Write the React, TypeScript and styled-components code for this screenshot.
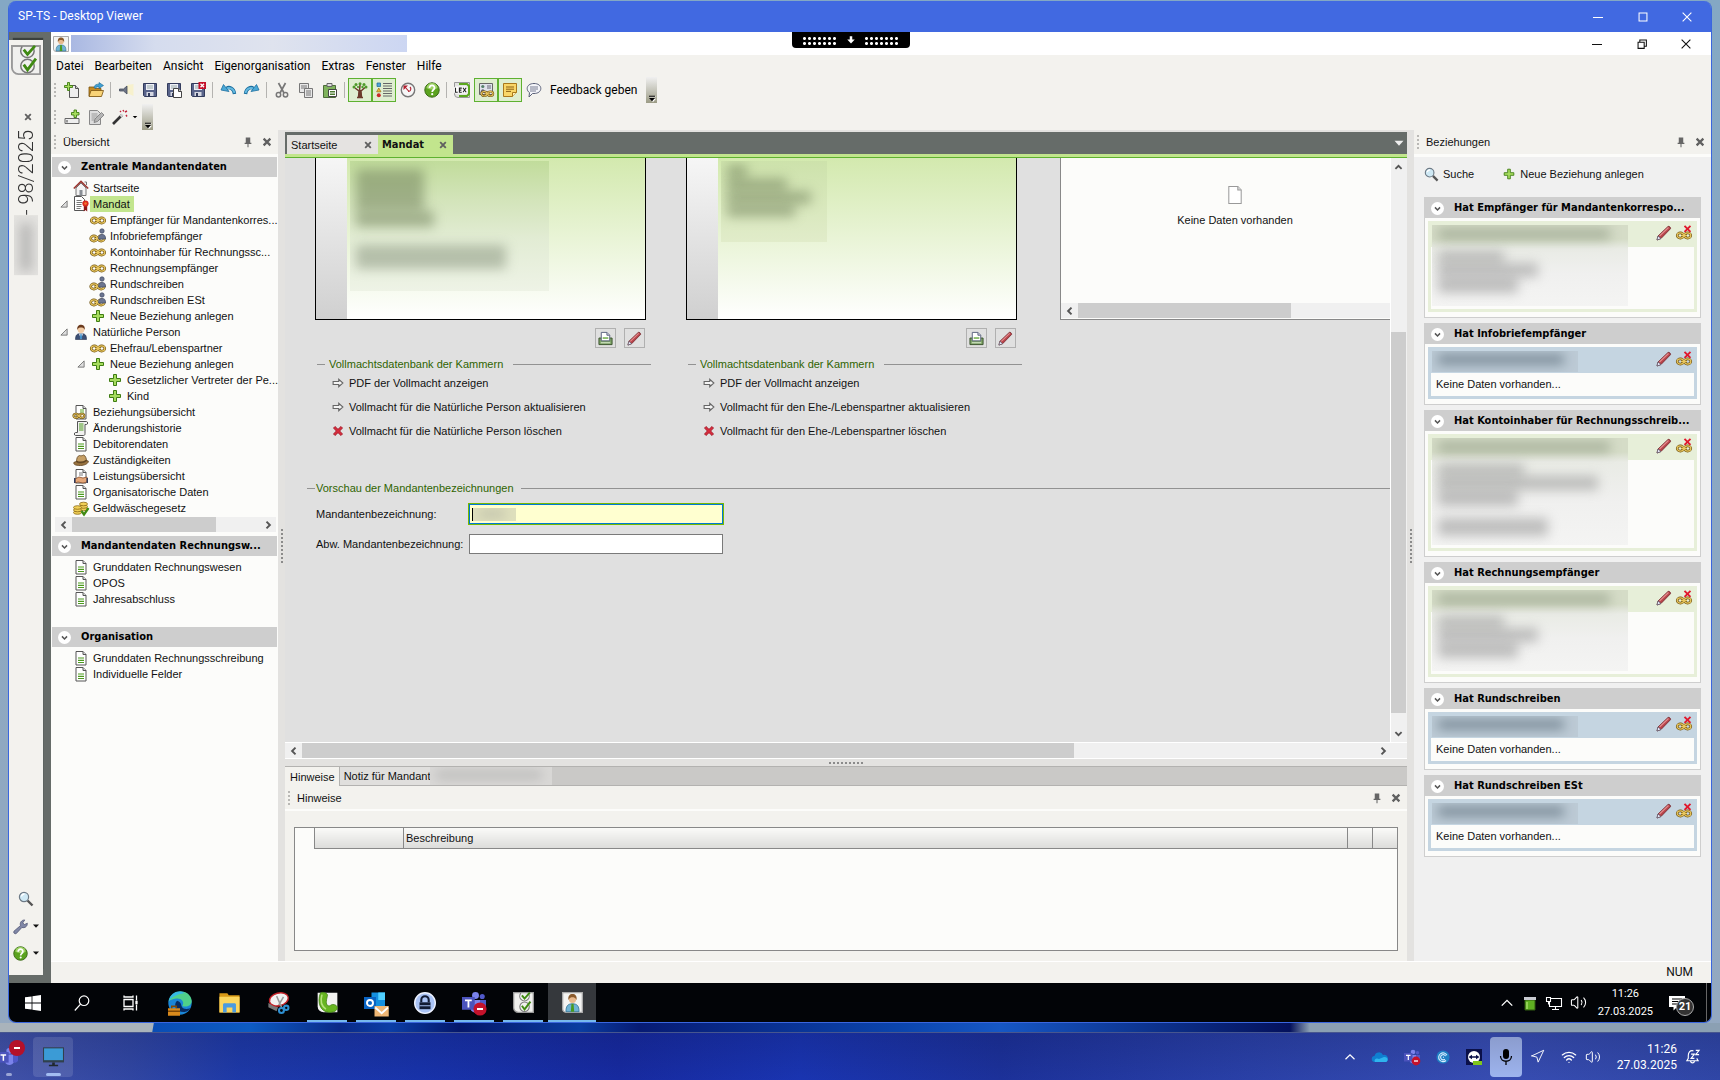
import React from "react";
import styled, { createGlobalStyle, css } from "styled-components";
import { Navigation, Volume2, Wifi } from "lucide-react";

const sans = `"Liberation Sans", Arial, sans-serif`;
const ui = `Roboto, "Open Sans", sans-serif`;
const heading = `"DejaVu Sans Condensed", "DejaVu Sans", sans-serif`;

const Global = createGlobalStyle`
  *, *::before, *::after { box-sizing: border-box; }
  body { margin: 0; font-family: ${sans}; font-size: 11px; color: #111; overflow: hidden; }
  button { border: 0; padding: 0; background: none; font: inherit; color: inherit; display: flex; align-items: center; }
  ul { list-style: none; margin: 0; padding: 0; }
  h2 { margin: 0; }
  svg { display: block; flex: none; }
`;

/* ---------- icons ---------- */

const page = (
  <>
    <path d="M3 1.5h7l3 3v10.5H3z" fill="#fff" stroke="#555" />
    <path d="M10 1.5v3h3" fill="#ddd" stroke="#555" />
  </>
);
const links = (
  <>
    <ellipse cx="4.4" cy="8.500" rx="3.200" ry="2.600" />
    <ellipse cx="11.600" cy="8.500" rx="3.200" ry="2.600" />
    <path d="M5 8.500h6" />
  </>
);
const chain = (
  <g fill="none">
    <g stroke="#6f5312" strokeWidth="2.600">{links}</g>
    <g stroke="#e8c65e" strokeWidth="1.200">{links}</g>
  </g>
);
const plus = <path d="M6.500 2.500h3v4h4v3h-4v4h-3v-4h-4v-3h4z" fill="#a6dc5e" stroke="#3f7d12" />;
const floppy = (
  <>
    <path d="M1.500 1.500h13v13h-12l-1-1z" fill="#59648a" stroke="#333c5c" />
    <path d="M4 2h8v6H4z" fill="#eef0f6" />
    <path d="M5 4h6M5 6h6" stroke="#9aa" />
    <path d="M4.500 10h7v4h-7z" fill="#d5d8e2" />
    <path d="M6 11h2v3H6z" fill="#333c5c" />
  </>
);
const person = (
  <>
    <path d="M2.500 15.500c0-4 1-6 5.500-6s5.500 2 5.500 6z" fill="#3c4f74" stroke="#26334f" strokeWidth=".6" />
    <path d="M6 9.500h4l-2 6z" fill="#fff" />
    <path d="M7.400 10h1.200l.6 4-1.200 1.500L6.800 14z" fill="#3d8ec9" />
    <circle cx="8" cy="5.500" r="3.400" fill="#f3cda6" />
    <path d="M4.300 6C3.800 2 6 .6 8.500.8S12.300 3 11.700 6c-.6-2-2-2.500-3.700-2.500S5 4 4.300 6z" fill="#6a3a1d" />
  </>
);
const arrowUndo = (
  <>
    <path d="M14.500 12C14 6 9 4.500 6.500 6.500" fill="none" stroke="#1c6f9f" strokeWidth="3.400" />
    <path d="M14.500 11C13.500 6 9 5 6 7" fill="none" stroke="#63b9e0" strokeWidth="1.800" />
    <path d="M1 8l2.500-5.500L9 9.500z" fill="#4aa8d6" stroke="#1c6f9f" strokeWidth=".8" />
  </>
);
const checks = (
  <>
    <path d="M.500.500h15v15H4a3.500 3.500 0 01-3.500-3.500z" fill="#f0f0ee" stroke="#999" />
    <g fill="none" stroke="#777" strokeWidth=".8">
      <path d="M6 .8a3.600 3.600 0 105.500 0" />
      <circle cx="8.800" cy="11.200" r="3.600" />
    </g>
    <path d="M6.800 2.500l2 2.500 4-4.500M6.800 10.500l2 2.800 4.500-6" fill="none" stroke="#3f8a12" strokeWidth="1.500" />
  </>
);
const userTile = (
  <>
    <path d="M.500.500h15v15H3a2.500 2.500 0 01-2.500-2.500z" fill="#f4f4f2" stroke="#aaa" />
    <path d="M3 15c0-4.500 1.500-6 5-6s5 1.500 5 6z" fill="#6fb3d4" stroke="#2e6f91" strokeWidth=".6" />
    <path d="M7.200 9h1.600l.5 6H6.700z" fill="#4b9a1f" />
    <circle cx="8" cy="5.500" r="2.800" fill="#e8b98d" />
    <path d="M4.900 6C4.400 2.800 6 1.500 8 1.500S11.600 2.800 11.100 6C10.300 4.300 9 4 8 4S5.700 4.300 4.900 6z" fill="#8a5a2b" />
  </>
);
const teamsBase = (
  <>
    <circle cx="9" cy="3" r="2.300" fill="#7b83eb" />
    <circle cx="13.500" cy="3.700" r="1.700" fill="#5059c9" />
    <path d="M6 6h7v5a4 4 0 01-7 2z" fill="#7b83eb" />
    <path d="M12 6h4v4.500a2.500 2.500 0 01-4 1.500z" fill="#5059c9" />
    <path d="M0 4h8.500v8.500H0z" fill="#4b53bc" />
    <path d="M2 6.300h4.500M4.300 6.300V11" stroke="#fff" strokeWidth="1.200" />
  </>
);

const art: Record<string, React.ReactNode> = {
  newDoc: (
    <>
      <path d="M5.500 3.500h6l3 3v9h-9z" fill="#eee" stroke="#555" />
      <path d="M11.500 3.500v3h3" fill="#ccc" stroke="#555" />
      <path d="M3.500.500h2v3h3v2h-3v3h-2v-3h-3v-2h3z" fill="#a6dc5e" stroke="#3f7d12" strokeWidth=".9" />
    </>
  ),
  open: (
    <>
      <path d="M1 14V5h5l1 1.500h6V14z" fill="#c78a1e" stroke="#7a5310" strokeWidth=".8" />
      <path d="M1 14.500l2-6h12.500l-2 6z" fill="#f8d377" stroke="#7a5310" strokeWidth=".8" />
      <path d="M6 5.500c.5-3 3-3.500 5-3.300V.5l4.500 3-4.500 3V5C9 4.800 8 5 7.500 6.500z" fill="#3f9fd2" stroke="#1d6a94" strokeWidth=".6" />
    </>
  ),
  horn: (
    <>
      <path d="M9 3l6.500-1v12L9 11z" fill="#f7f1cd" />
      <path d="M1.500 7h4L9 4v8L5.500 9h-4z" fill="#6d7486" stroke="#444b5c" strokeWidth=".8" />
    </>
  ),
  save: floppy,
  saveAs: (
    <>
      {floppy}
      <path d="M7.500 6.500h5l3 3v6h-8z" fill="#fff" stroke="#444" />
      <path d="M12.500 6.500v3h3" fill="#ccc" stroke="#444" />
    </>
  ),
  saveX: (
    <>
      {floppy}
      <path d="M8.500 0H16v7H8.500z" fill="#c4122b" />
      <path d="M10.500 1.800l3.500 3.500m0-3.500l-3.500 3.500" stroke="#fff" strokeWidth="1.300" />
    </>
  ),
  undo: arrowUndo,
  redo: <g transform="matrix(-1 0 0 1 16 0)">{arrowUndo}</g>,
  cut: (
    <g fill="none" stroke="#777">
      <path d="M4.500 1l5.500 10M11.500 1L6 11" strokeWidth="1.700" />
      <circle cx="4.500" cy="12.800" r="2.200" strokeWidth="1.500" />
      <circle cx="11.500" cy="12.800" r="2.200" strokeWidth="1.500" />
    </g>
  ),
  copy: (
    <g fill="#e8e8e8" stroke="#777">
      <path d="M1.500 1.500h9v9h-9z" />
      <path d="M3 4h6M3 6h6" />
      <path d="M6.500 6.500h8v9h-8z" />
      <path d="M8 9h5M8 11h5M8 13h5" />
    </g>
  ),
  paste: (
    <>
      <path d="M1.500 3.500h12v12h-12z" fill="#7fb35c" stroke="#4c6b39" />
      <path d="M5 1.500h5v3H5z" fill="#ddd" stroke="#666" />
      <path d="M6.500 7.500h8v7h-8z" fill="#fff" stroke="#444" />
      <path d="M8 9.500h5M8 11h5M8 12.500h5" stroke="#4d7a33" />
    </>
  ),
  tree: (
    <>
      <path d="M6.500 15.500L7 9 3 6M7.500 9L8 3M9.500 15.500L9 9l4-3.500M5 15.500h6M8 8v7" fill="none" stroke="#6b3b2b" strokeWidth="1.500" />
      <g fill="#4e9a2a">
        <circle cx="2" cy="5" r="1.500" /><circle cx="4" cy="2.600" r="1.500" /><circle cx="8" cy="1.800" r="1.500" />
        <circle cx="12" cy="2.600" r="1.500" /><circle cx="14" cy="5" r="1.500" /><circle cx="6" cy="5" r="1.100" /><circle cx="10.500" cy="5" r="1.200" />
      </g>
    </>
  ),
  list: (
    <>
      <path d="M1 1h3.500v3.500H1z" fill="#53a4d6" stroke="#1e6594" strokeWidth=".7" />
      <path d="M2.800 6L5 9.800H.6z" fill="#efbc3c" stroke="#9b7012" strokeWidth=".7" />
      <circle cx="2.800" cy="13.300" r="2" fill="#c92b2b" />
      <path d="M7 1.500h9M7 4h9M7 6.500h9M7 9h9M7 11.500h9M7 14h9" stroke="#666" />
    </>
  ),
  clock: (
    <>
      <circle cx="8" cy="8" r="6.700" fill="#f7f7f7" stroke="#777" strokeWidth="1.400" />
      <path d="M5 5l4 4.500M8 9.500c3 0 3.500-3 2-4.500" fill="none" stroke="#b21f2d" strokeWidth="1.100" />
      <path d="M3.500 3.500H8L3.500 8z" fill="#b21f2d" />
    </>
  ),
  help: (
    <>
      <circle cx="8" cy="8" r="7.200" fill="#5ba31f" stroke="#3a6b16" />
      <path d="M2.500 6a5.500 5 0 0111 0c-3 2-7 2-11 0z" fill="#9ed266" />
      <path d="M5.500 6c0-3.600 5.200-3.300 5 0-.1 1.800-2.300 1.800-2.300 4" fill="none" stroke="#fff" strokeWidth="1.800" />
      <circle cx="8.200" cy="12.200" r="1.100" fill="#fff" />
    </>
  ),
  lex: (
    <>
      <path d="M.500.500h15v15H4a3.500 3.500 0 01-3.500-3.500z" fill="#e4e4e2" stroke="#999" />
      <path d="M5 2h8l2 2v8l-2 2H5" fill="none" stroke="#5ca81f" strokeWidth="2" />
      <rect x="0" y="4.500" width="13.500" height="7" rx="1.500" fill="#fff" />
      <path d="M1.500 5.800v4.400h2.200M7.800 6.100H5.400v4.100h2.400M5.400 8.100h2M9 5.800l3.200 4.500M12.200 5.800L9 10.300" fill="none" stroke="#222" strokeWidth="1.100" />
    </>
  ),
  picture: (
    <>
      <path d="M1.500 1.500h13v11h-13z" fill="#dfe3ec" stroke="#666" />
      <circle cx="4.800" cy="4.500" r="1.600" fill="#55806a" />
      <path d="M2.500 11c0-5 4.600-5 4.600 0z" fill="#667" />
      <path d="M9 4h4M9 6h4" stroke="#667" />
      <g transform="translate(2.500 4.500) scale(.85)">{chain}</g>
    </>
  ),
  note: (
    <>
      <path d="M1.500 1.500h13v9l-4 4h-9z" fill="#f9d667" stroke="#a9781b" />
      <path d="M14.500 10.500h-4v4" fill="#fff0b5" stroke="#a9781b" />
      <path d="M4 5h8M4 7.200h8M4 9.400h5" stroke="#8a6112" />
    </>
  ),
  chat: (
    <>
      <path d="M8 1.500c4 0 6.800 2 6.800 5S12 11.500 8 11.500H6.500L3 15l.5-4.400C2 9.700 1.200 8.200 1.200 6.500c0-3 2.800-5 6.800-5z" fill="#f4f5fa" stroke="#5a6078" />
      <path d="M4 5h8M4 7h8M4 9h6" stroke="#5a6078" strokeWidth=".8" />
    </>
  ),
  formPlus: (
    <>
      <path d="M1 9.500h14v5H1z" fill="#eee" stroke="#666" />
      <path d="M3 11v2.500" stroke="#444" />
      <path d="M10 1h2.500v2.500H15V6h-2.500v2.500H10V6H7.500V3.500H10z" fill="#a6dc5e" stroke="#3f7d12" strokeWidth=".9" />
    </>
  ),
  edit: (
    <>
      <path d="M1.500 1.500h8l3 3v11h-11z" fill="#dedede" stroke="#888" />
      <path d="M3.500 5h6M3.500 7h6M3.500 9h4M3.500 11h3" stroke="#999" />
      <path d="M6 13.500l1-3.500 6.500-6.500 2.500 2.500-6.500 6.500z" fill="#b5b5b5" stroke="#777" strokeWidth=".8" />
    </>
  ),
  wand: (
    <>
      <path d="M1 15L10 6" stroke="#333" strokeWidth="2.600" />
      <path d="M8.500 7.500L10.500 5.500" stroke="#ccc" strokeWidth="2.600" />
      <path d="M11 1l.8 1.500M15 2l-2 1M14 6l1 1.500M8 2l1 1" stroke="#c0253c" strokeWidth="1.400" />
    </>
  ),
  home: (
    <>
      <path d="M3 8v7.500h10V8L8 3z" fill="#f3f3f3" stroke="#777" />
      <path d="M6.500 10h3v5.500h-3z" fill="#8a8f96" />
      <path d="M.8 8.500L8 1.500l7.200 7" fill="none" stroke="#9c3a34" strokeWidth="1.700" />
      <path d="M11.500 2h2v3" fill="none" stroke="#777" />
    </>
  ),
  mandat: (
    <>
      <path d="M1.500.500h7l3 3v11h-10z" fill="#fff" stroke="#555" />
      <path d="M3.500 4.500h5M3.500 6.500h6M3.500 8.500h5M3.500 10.500h5M3.500 12.500h4" stroke="#777" />
      <path d="M10.800 9h3.400v6.500l-1.700-1.400-1.700 1.400z" fill="#8c1717" />
      <circle cx="12.500" cy="7.500" r="3.100" fill="#d9281d" />
      <circle cx="12.500" cy="7.500" r="1.300" fill="#f2772e" />
    </>
  ),
  chain: chain,
  chainPerson: (
    <>
      <g transform="translate(-.5 2)">{chain}</g>
      <path d="M8.500 11c0-3.500 1-4.500 3.500-4.500s3.500 1 3.500 4.500z" fill="#6b7590" stroke="#424b66" strokeWidth=".7" />
      <circle cx="12" cy="3" r="2.200" fill="#6b7590" stroke="#424b66" strokeWidth=".7" />
    </>
  ),
  plus: plus,
  person: person,
  docChain: (
    <>
      {page}
      <path d="M7 6h4M7 8h4" stroke="#5aa522" />
      <g transform="translate(-.5 5) scale(.8)">{chain}</g>
    </>
  ),
  scroll: (
    <>
      <path d="M4.500 1.500h9c1.500 0 1.500 3 0 3H12v9c0 2-1 2-2 2H2.500c-1.500 0-1.500-3 0-3h2z" fill="#f1f1ef" stroke="#555" />
      <path d="M6 4h4.500M6 6h4.500M6 8h4.500M6 10h4.500" stroke="#4d9a1f" />
    </>
  ),
  doc: (
    <>
      {page}
      <path d="M5 8h6M5 10.300h6M5 12.500h6" stroke="#4d9a1f" strokeWidth="1.200" />
    </>
  ),
  hat: (
    <>
      <path d="M.8 10.500C3 9 13 8 15.300 9c.5 2-3 4.500-8 4.500S.5 12.500.8 10.500z" fill="#9a7440" stroke="#5f4421" strokeWidth=".8" />
      <path d="M3.500 10c0-4 1-6 3-6.500 1.500.5 2.500.3 4-.5 2 .5 3 3.500 3 6-2 2-8 2.500-10 1z" fill="#c6a066" stroke="#5f4421" strokeWidth=".8" />
      <path d="M3.600 9.300c3 1.500 7 1 9.800-1" stroke="#5f4421" fill="none" strokeWidth="1.400" />
    </>
  ),
  docHand: (
    <>
      {page}
      <path d="M6 5h4M6 7h4" stroke="#777" />
      <path d="M2 11l4-2 4 1 4-1v5l-4 1-5-1-3 1z" fill="#e5a778" stroke="#8a4f2b" strokeWidth=".8" />
      <path d="M1 10h1.500v5H1zM13.500 10H15v5h-1.500z" fill="#333c5c" />
    </>
  ),
  coins: (
    <>
      <g fill="#f0cf57" stroke="#8c6a13" strokeWidth=".8">
        <ellipse cx="10.500" cy="9" rx="4" ry="1.800" /><ellipse cx="10.500" cy="6.500" rx="4" ry="1.800" />
        <ellipse cx="10.500" cy="4" rx="4" ry="1.800" /><ellipse cx="4.500" cy="12.500" rx="4" ry="1.800" />
        <ellipse cx="4.500" cy="10" rx="4" ry="1.800" /><ellipse cx="4.500" cy="7.500" rx="4" ry="1.800" />
      </g>
      <path d="M8.500 11l2.500 3.500L15.500 8" fill="none" stroke="#3f8a12" strokeWidth="2.200" />
    </>
  ),
  search: (
    <>
      <path d="M9.500 9.500l5 5" stroke="#555" strokeWidth="2.400" />
      <circle cx="6" cy="6" r="4.600" fill="#cfe9f5" stroke="#6d7a86" strokeWidth="1.200" />
      <path d="M3.500 5.500a3 3 0 013-2.500" fill="none" stroke="#fff" strokeWidth="1.300" />
    </>
  ),
  wrench: (
    <path d="M1 13l7-6c-1-3 1-6 4.500-6l-2 3 1.500 2 3.300-1.500C15.500 8 12.500 10 9.500 9L3.500 15.500C2 16.500 0 14.500 1 13z" fill="#8087a6" stroke="#4c5272" strokeWidth=".8" />
  ),
  arrow: <path d="M1.500 6H9V3l5.500 5L9 13v-3H1.500z" fill="#f4f4f4" stroke="#666" strokeWidth="1.500" />,
  cross: <path d="M2 4l2-2 4 3.800L12 2l2 2-3.800 4L14 12l-2 2-4-3.800L4 14l-2-2 3.800-4z" fill="#d92b3c" stroke="#a31c2a" strokeWidth="1.200" />,
  print: (
    <>
      <path d="M1 7.500h14v7H1z" fill="#7fa467" stroke="#38502b" />
      <path d="M3.500 10.500V1.500h6l3 3v6z" fill="#fff" stroke="#59617d" />
      <path d="M9.500 1.500v3h3" fill="#ccd" stroke="#59617d" />
      <path d="M5 7.500h6" stroke="#4d9a1f" strokeWidth="1.300" />
      <path d="M3 12.500h10" stroke="#cfe2c2" strokeWidth="1.200" />
    </>
  ),
  pencil: (
    <>
      <path d="M1 15l1-4L12 1.500c1-.8 3 1 2.500 2.200L5 13.500z" fill="#b8434a" stroke="#6f2429" strokeWidth=".8" />
      <path d="M3.500 11l9-8.500" stroke="#e48d8f" strokeWidth="1.100" />
      <path d="M1 15l1-4 3 2.500z" fill="#eef" stroke="#556" strokeWidth=".7" />
    </>
  ),
  chainX: (
    <>
      <g transform="translate(0 2)">{chain}</g>
      <path d="M8.500.8l6 6m0-6l-6 6" stroke="#e0182d" strokeWidth="1.900" />
    </>
  ),
  pin: <path d="M5 2h6v7h1.500v1.500H8.700V15H7.300v-4.500H3.500V9H5z" fill="#666" />,
  close: <path d="M3.500 3.500l9 9m0-9l-9 9" stroke="#606060" strokeWidth="3" />,
  checks: checks,
  userTile: userTile,
  emptyDoc: (
    <>
      <path d="M2.500.500h8l3 3v12h-11z" fill="#fff" stroke="#999" strokeWidth=".9" />
      <path d="M10.500.500v3h3" fill="#ddd" stroke="#999" strokeWidth=".9" />
    </>
  ),
  chevLeft: <path d="M10 3.500L5.500 8l4.500 4.500" fill="none" stroke="#555" strokeWidth="2.600" />,
  chevRight: <path d="M6 3.500L10.500 8 6 12.500" fill="none" stroke="#555" strokeWidth="2.600" />,
  chevUp: <path d="M3.500 10L8 5.500l4.500 4.500" fill="none" stroke="#555" strokeWidth="2.600" />,
  chevDown: <path d="M3.500 6L8 10.500 12.500 6" fill="none" stroke="#555" strokeWidth="2.600" />,
  thinUp: <path d="M2 11l6-6 6 6" fill="none" stroke="#fff" strokeWidth="1.600" />,
  down: <path d="M2 5h12l-6 6.500z" fill="currentColor" />,
  downStem: <path d="M6 2h4v5h4l-6 6.500L2 7h4z" fill="currentColor" />,
  more: (
    <>
      <path d="M3 4.500h12v2H3zM4 9.500h12l-6 6.500z" fill="#fff" />
      <path d="M2 3.500h12v2H2zM2 8h12l-6 6.500z" fill="#000" />
    </>
  ),
  expander: <path d="M13 3v10H3z" fill="#ddd" stroke="#666" strokeWidth="1.300" />,
  min: <path d="M3 8.500h10" stroke="currentColor" strokeWidth="1.200" />,
  max: <path d="M3.500 3.500h9v9h-9z" fill="none" stroke="currentColor" strokeWidth="1.200" />,
  restore: <path d="M3.500 6h7v7h-7zM5.500 6V3.500H13v7h-2.500" fill="none" stroke="currentColor" strokeWidth="1.200" />,
  x: <path d="M3 3l10 10M13 3L3 13" stroke="currentColor" strokeWidth="1.300" />,
  /* task bar */
  windows: <path d="M0 2.300l6.600-.9v6.200H0zM7.400 1.300L16 0v7.600H7.400zM0 8.400h6.600v6.200L0 13.700zM7.400 8.400H16V16l-8.600-1.200z" fill="#fff" />,
  find: (
    <g fill="none" stroke="#fff" strokeWidth="1.200">
      <circle cx="10" cy="5.700" r="4.800" />
      <path d="M6.600 9.200L.8 15.500" />
    </g>
  ),
  taskView: (
    <g fill="none" stroke="#fff" strokeWidth="1.300">
      <path d="M1 4.500h9v7H1zM1 .5V2h9V.5M1 15.500V14h9v1.500M13.500.5v5M13.500 9.500v6" />
      <path d="M13 6.500h1v2h-1z" fill="#fff" />
    </g>
  ),
  edge: (
    <>
      <circle cx="8" cy="8" r="7.800" fill="#1a86d8" />
      <path d="M.5 7C2-2 15-1.500 15.800 6.500c.2 3.500-4 4.500-6.300 3.500 2-3-1-5.500-4-5C3 5.500 1 6 .5 7z" fill="#4fd08a" />
      <path d="M.5 7C2 .5 8-.5 11 1.500 7 2 2.500 3.500.5 7z" fill="#35b7e8" />
      <path d="M6 6.500c-3 3 0 8 5 7.500 2-.2 3-1 4-2.500-3 1-5.500.5-6-1.500-.4-2-1-3-3-3.500z" fill="#082d63" />
      <path d="M0 11.500h8v5H0z" fill="#d98a1c" />
      <path d="M2.500 11.500v-1.300h3v1.300M0 13.500h8" fill="none" stroke="#7d4706" />
    </>
  ),
  folder: (
    <>
      <path d="M1 1.500h5.500l1 1.500H15v12H1z" fill="#d99a17" />
      <path d="M1 4h14v11H1z" fill="#fbd65e" />
      <path d="M3.500 15V9.500c0-.6.4-1 1-1h7c.6 0 1 .4 1 1V15h-2.500v-3.500h-4V15z" fill="#4a9be0" />
    </>
  ),
  snip: (
    <>
      <path d="M1 8l7 3-1 3-6-3z" fill="#777" />
      <ellipse cx="8.500" cy="5.500" rx="7" ry="4.600" fill="#f1f1f1" stroke="#c22026" transform="rotate(-15 8 5)" />
      <path d="M7 3l4 9M12 3.500L8.500 9.500" stroke="#999" strokeWidth="1.100" />
      <g fill="none" stroke="#2e8fd0" strokeWidth="1.500"><circle cx="10.500" cy="13.500" r="1.800" /><circle cx="14" cy="11.500" r="1.600" /></g>
    </>
  ),
  phone: (
    <>
      <path d="M.500.500h15v15H5A4.500 4.500 0 01.500 11z" fill="#f2f2f0" />
      <path d="M2.500 1C0 8 2.500 15 9 15.500c4 .2 6.500-1.500 6.500-3.500 0-1.500-1.500-2.500-3.500-2.500-1.500 0-2 1.500-3.500 1C6 9.500 7.500 5 8 2.500 8 .5 3.500-.5 2.500 1z" fill="#67b520" stroke="#3f7d12" strokeWidth=".6" />
      <path d="M3.800 2c-1.500 5 0 9 3 11" fill="none" stroke="#b6e27c" strokeWidth="1.200" />
    </>
  ),
  outlook: (
    <>
      <path d="M5 1h9v10H5z" fill="#1490df" />
      <path d="M9.500 1H14v5H9.500z" fill="#50d0ff" />
      <path d="M0 4h8v8H0z" fill="#0a64c2" />
      <circle cx="4" cy="8" r="2" fill="none" stroke="#fff" strokeWidth="1.300" />
      <path d="M7 10h9.500v7H7z" fill="#efb775" />
      <path d="M7.500 11l4.300 3.800L16 11" fill="none" stroke="#fff" strokeWidth="1.200" />
    </>
  ),
  lock: (
    <>
      <circle cx="8" cy="8" r="7.500" fill="#a9c3f5" stroke="#eef3ff" />
      <path d="M4 7.500h8v5H4z" fill="#111b33" />
      <path d="M5.300 7.500V5.800a2.700 2.700 0 015.400 0v1.700" fill="none" stroke="#111b33" strokeWidth="1.500" />
      <path d="M4 10h8" stroke="#a9c3f5" strokeWidth=".7" />
    </>
  ),
  teams: (
    <>
      {teamsBase}
      <circle cx="12" cy="12" r="4.400" fill="#c4122b" />
      <path d="M10 12h4" stroke="#fff" strokeWidth="1.300" />
    </>
  ),
  teamsPlain: teamsBase,
  battery: (
    <>
      <path d="M3 5h10v10H3z" fill="#5fb022" stroke="#2f5a10" />
      <path d="M2 2h12v3H2z" fill="#c9ccd2" />
      <path d="M5 7v7" stroke="#a9e06f" strokeWidth="1.400" />
    </>
  ),
  network: (
    <g fill="none" stroke="#fff" strokeWidth="1.100">
      <path d="M4 3.500h11.500v8H3.500V7M9.500 11.500v3M6 14.500h7M.5 2.500h4v4h-4zM2.500 6.500v3" />
    </g>
  ),
  message: (
    <>
      <path d="M0 1h16v11H8l-3.500 3.500V12H0z" fill="#fff" />
      <path d="M3 4h10M3 6.500h10M3 9h7" stroke="#000" strokeWidth="1.200" />
    </>
  ),
  monitor: (
    <>
      <path d="M0 1h16v11.500H0z" fill="#31404d" />
      <path d="M.8 1.800h14.400v9H.8z" fill="#3b9bd6" />
      <path d="M7 12.500h2v2H7zM4.500 14.300h7v1.200h-7z" fill="#20282f" />
    </>
  ),
  cloud: (
    <>
      <path d="M3 13a3 3 0 01-.5-6A4.500 4.500 0 0111 6a3.500 3.500 0 012.500 7z" fill="#0f7ed0" />
      <path d="M3 13c-1.500-3 2-4.500 4-3l5-2c3 0 4 1.500 3.500 3.500-.5 1-1.200 1.500-2 1.500z" fill="#2fb4ee" />
    </>
  ),
  swirl: (
    <>
      <circle cx="8" cy="8" r="7.500" fill="#1f7fc4" />
      <path d="M12.500 6a5 5 0 10-1 6M11 7a3 3 0 10-.8 3.600M8 8l1 .5" fill="none" stroke="#d8efff" strokeWidth="1.300" />
    </>
  ),
  teamViewer: (
    <>
      <path d="M0 0h16v16H0z" fill="#0b1049" />
      <circle cx="8" cy="8" r="6" fill="#fff" />
      <path d="M2.500 8L6 5.800v1.500h4V5.800L13.500 8 10 10.200V8.700H6v1.500z" fill="#0b1049" />
      <path d="M7 12h9v4H7z" fill="#7fc51c" />
    </>
  ),
  mic: (
    <>
      <rect x="5" y="0" width="6" height="10" rx="3" fill="#000" />
      <path d="M2.500 7c0 7 11 7 11 0M8 12.500V16" fill="none" stroke="#000" strokeWidth="1.300" />
    </>
  ),
  snooze: (
    <>
      <path d="M9 2C5 1 3.500 4 3.500 7v3L2 12.500h12L12.500 10M6 12.500c0 3 4 3 4 0" fill="none" stroke="#fff" strokeWidth="1.200" />
      <path d="M6.500 5.500h3.500L6.500 10H10M11.500 1.500H15L11.500 6H15" fill="none" stroke="#fff" strokeWidth="1.200" />
    </>
  ),
};

function Icon({ name, size = 16 }: { name: string; size?: number }) {
  return (
    <svg width={size} height={size} viewBox="0 0 16 16" aria-hidden="true" overflow="visible">
      {art[name]}
    </svg>
  );
}

/* ---------- desktop and viewer window ---------- */

const Desktop = styled.div`
  height: 100vh;
  display: grid;
  grid-template-rows: minmax(0, 1fr) 48px;
  background:
    linear-gradient(100deg, #a9b3bb 0 151px, transparent 152px) bottom 48px left 0 / 100% 9px no-repeat,
    linear-gradient(90deg, #0a4db4 150px, #0d5bc3 250px, #0a2a88 340px, #0b3ea6 390px, #05176b 460px, #0a3da0 580px, #071b74 640px, #0b45ad 900px, #1657c4 1000px, #04115c 1290px, #8ba0b3 1310px) bottom 48px left 0 / 100% 9px no-repeat,
    linear-gradient(#84a8c4, #94a8c0);
`;

const Viewer = styled.div`
  margin: 1px 8px 9px;
  min-height: 0;
  border: 1px solid #3a66de;
  border-top: 0;
  border-radius: 8px;
  overflow: hidden;
  display: flex;
  flex-direction: column;
`;

const ViewerTitle = styled.header`
  height: 31px;
  flex: none;
  padding-left: 9px;
  background: #4169e1;
  color: #fff;
  font: 12px/31px ${ui};
  display: flex;
  justify-content: space-between;
`;

const Controls = styled.div`
  display: flex;
  align-items: center;
  gap: 30px;
  padding-right: 17px;
  button { height: 16px; }
`;

const Session = styled.div`
  flex: 1;
  min-height: 0;
  display: flex;
`;

const Gutter = styled.div`
  width: 42px;
  flex: none;
  padding: 8px 8px 8px 0;
  background: #666c69;
`;

const Strip = styled.aside`
  height: 100%;
  background: #f3f2ee;
  box-shadow: 2px -4px 1px -2px #3a403e;
  display: flex;
  flex-direction: column;
  align-items: center;
  padding: 5px 0 14px;
`;

const StripClose = styled.button`
  margin: 37px 0 8px 4px;
`;

const VerticalLabel = styled.div`
  writing-mode: vertical-rl;
  transform: rotate(180deg);
  font: 300 20px/24px ${ui};
  color: #333;
  display: flex;
  align-items: center;
`;

const StripTools = styled.div`
  margin-top: auto;
  display: flex;
  flex-direction: column;
  gap: 11px;
  width: 100%;
  padding-left: 4px;
  button { gap: 4px; height: 16px; }
  button:first-child { padding-left: 5px; }
`;

const AppFrame = styled.div`
  flex: 1;
  min-width: 0;
  display: flex;
  flex-direction: column;
  background: #f3f2ee;
`;

/* obscured personal data: a patch with smudged lines */
const Patch = styled.div<{ $w: number; $h: number; $bg?: string }>`
  width: ${(p) => p.$w}px;
  height: ${(p) => p.$h}px;
  flex: none;
  background: ${(p) => p.$bg ?? "transparent"};
  overflow: hidden;
  padding: 4px 6px;
`;
const Smudge = styled.div<{ $w: string; $c?: string; $h?: number; $mt?: number }>`
  width: ${(p) => p.$w};
  height: ${(p) => p.$h ?? 13}px;
  margin-top: ${(p) => p.$mt ?? 0}px;
  background: ${(p) => p.$c ?? "#8b8b8b"};
  opacity: 0.5;
  filter: blur(6px);
`;

const AppTitle = styled.div`
  height: 23px;
  flex: none;
  background: #fff;
  display: flex;
  align-items: center;
  padding-left: 2px;
  gap: 2px;
  position: relative;
  > ${Controls} { margin-left: auto; padding-right: 18px; }
`;

const SessionHandle = styled.button`
  position: absolute;
  top: 0;
  left: calc(50% - 89px);
  width: 118px;
  height: 16px;
  justify-content: center;
  gap: 8px;
  background: #000;
  border-radius: 0 0 4px 4px;
  color: #fff;
`;

const Dots = styled.span`
  width: 36px;
  height: 9px;
  background: radial-gradient(circle, #fff 1px, transparent 2px) 0 0 / 5px 5px;
`;

const MenuBar = styled.nav`
  height: 22px;
  flex: none;
  display: flex;
  gap: 11px;
  padding-left: 5px;
  font: 12px/22px ${ui};
  color: #000;
`;

const Toolbar = styled.div`
  height: 26px;
  flex: none;
  display: flex;
  align-items: center;
  padding-left: 3px;
  font: 12px/24px ${ui};
  color: #000;
  & + & { margin-top: 1px; }
`;

const Grip = styled.span`
  width: 2px;
  height: 14px;
  flex: none;
  background: repeating-linear-gradient(#b9b8b5 0 2px, transparent 2px 4px);
  ${Toolbar} > & { margin-right: 4px; }
`;

const Tool = styled.button<{ $on?: boolean }>`
  width: 24px;
  height: 24px;
  flex: none;
  justify-content: center;
  ${(p) => p.$on && css`
    border: 1px solid #5eb130;
    background: #dfeed0;
  `}
`;

const TextTool = styled.button`
  padding-left: 4px;
`;

const Separator = styled.span`
  width: 1px;
  height: 16px;
  margin: 0 3px 0 2px;
  background: #b4b3b0;
`;

const Overflow = styled.button<{ $near?: boolean }>`
  width: 11px;
  height: 26px;
  margin-left: ${(p) => (p.$near ? 4 : 9)}px;
  align-items: flex-end;
  justify-content: center;
  padding-bottom: 1px;
  background: linear-gradient(#f0f0f0, #9c9c86);
`;

const Workspace = styled.div`
  flex: 1;
  min-height: 0;
  display: grid;
  grid-template-columns: 227px 7px minmax(0, 1fr) 7px 297px;
  background: #e3e2e0;
`;

const StatusBar = styled.footer`
  height: 22px;
  flex: none;
  border-top: 1px solid #fff;
  padding-right: 18px;
  font: 12px/21px ${ui};
  text-align: right;
`;

const Splitter = styled.div<{ $row?: boolean }>`
  display: flex;
  align-items: center;
  justify-content: center;
  ${(p) => (p.$row ? css`height: 7px; flex: none;` : css``)}
  &::before {
    content: "";
    width: ${(p) => (p.$row ? "34px" : "2px")};
    height: ${(p) => (p.$row ? "2px" : "34px")};
    background: repeating-linear-gradient(${(p) => (p.$row ? "90deg" : "180deg")}, #8b8b8b 0 2px, transparent 2px 4px);
  }
`;

/* ---------- docked panels ---------- */

const Panel = styled.section<{ $bg: string }>`
  background: ${(p) => p.$bg};
  min-height: 0;
  min-width: 0;
  display: flex;
  flex-direction: column;
  overflow: hidden;
`;

const PanelHead = styled.header`
  height: 27px;
  flex: none;
  background: #f3f2ee;
  border-bottom: 3px solid #fcfcfa;
  display: flex;
  align-items: center;
  gap: 7px;
  padding: 0 5px 0 3px;
  button:first-of-type { margin-left: auto; }
`;

const GroupHead = styled.button`
  width: calc(100% - 2px);
  height: 20px;
  flex: none;
  margin-left: 1px;
  padding-left: 6px;
  gap: 10px;
  background: #cecece;
  font: bold 11px/20px ${heading};
  color: #000;
  white-space: nowrap;
`;

const Round = styled.span`
  width: 13px;
  height: 13px;
  border-radius: 50%;
  background: #fff;
  display: grid;
  place-items: center;
`;

const Tree = styled.ul`
  padding-top: 3px;
`;

const Row = styled.li<{ $level: number }>`
  height: 16px;
  display: flex;
  align-items: center;
  padding-left: ${(p) => 8 + p.$level * 17}px;
`;

const Twisty = styled.span`
  width: 14px;
  flex: none;
  display: flex;
`;

const Node = styled.button<{ $selected?: boolean }>`
  height: 16px;
  white-space: nowrap;
  span {
    padding: 0 4px 0 3px;
    line-height: 16px;
    margin-left: 1px;
    ${(p) => p.$selected && css`background: #c2e58d;`}
  }
`;

const HBar = styled.div<{ $thumb: string }>`
  height: 15px;
  flex: none;
  background: #f0f0f0;
  display: grid;
  grid-template-columns: 17px minmax(0, 1fr) 17px;
  place-items: center;
  > span {
    justify-self: start;
    width: ${(p) => p.$thumb};
    height: 15px;
    background: #cdcdcd;
  }
`;

const TreeScroll = styled.div`
  margin: 1px 2px 4px 4px;
`;

const Spacer = styled.div`
  height: 20px;
`;

/* ---------- document area ---------- */

const Center = styled.main`
  display: flex;
  flex-direction: column;
  padding-top: 2px;
  min-width: 0;
  min-height: 0;
`;

const Tabs = styled.div`
  height: 26px;
  flex: none;
  display: flex;
  align-items: flex-start;
  padding: 3px 2px 0;
  background: #666c69;
  border-bottom: 1px solid #5eb130;
  box-shadow: inset 0 -3px #c2e58d;
`;

const Tab = styled.button<{ $active?: boolean }>`
  height: 19px;
  width: ${(p) => (p.$active ? 75 : 91)}px;
  justify-content: space-between;
  padding: 0 5px 0 4px;
  background: ${(p) => (p.$active ? "#c2e58d" : "#e5e3e1")};
  ${(p) => p.$active && css`font: bold 11px/19px ${heading};`}
`;

const TabMenu = styled.button`
  margin: 2px 0 0 auto;
  color: #eee;
`;

const Canvas = styled.div`
  flex: 1;
  min-height: 0;
  display: flex;
  background: #e0e0e0;
`;

const Form = styled.div`
  flex: 1;
  min-width: 0;
  overflow: hidden;
  padding-left: 22px;
`;

const CardRow = styled.div`
  display: flex;
  padding-left: 8px;
  gap: 35px;
`;

const CardColumn = styled.div`
  width: 336px;
  flex: none;
`;

const Card = styled.div`
  width: 331px;
  height: 162px;
  border: 1px solid #000;
  border-top: 0;
  padding: 3px 0 0 34px;
  background:
    linear-gradient(#f6f6f6, #d0d0d0) 0 0 / 31px 100% no-repeat,
    linear-gradient(#d3e9ae, #fff);
`;

const CardTools = styled.div`
  display: flex;
  justify-content: flex-end;
  gap: 8px;
  padding: 8px 6px 9px 0;
`;

const BoxButton = styled.button`
  width: 21px;
  height: 20px;
  justify-content: center;
  border: 1px solid #b0b0b0;
`;

const Legend = styled.h2<{ $tight?: boolean }>`
  display: flex;
  align-items: center;
  gap: ${(p) => (p.$tight ? 1 : 4)}px;
  font: 11px/14px ${sans};
  color: #2f6400;
  white-space: nowrap;
  margin-left: ${(p) => (p.$tight ? 0 : 2)}px;
  &::before { content: ""; width: 8px; height: 1px; background: #929292; }
  &::after { content: ""; flex: 1; height: 1px; margin-left: 6px; background: #929292; }
`;

const Action = styled.button`
  height: 24px;
  gap: 5px;
  padding-left: 17px;
  white-space: nowrap;
`;

const EmptyList = styled.div`
  flex: 1;
  min-width: 0;
  height: 162px;
  margin-left: 3px;
  border: solid #888;
  border-width: 0 0 1px 1px;
  background: #fcfcfa;
  overflow: hidden;
  display: flex;
  flex-direction: column;
  > div:first-child {
    flex: 1;
    width: 348px;
    padding-top: 28px;
    display: flex;
    flex-direction: column;
    align-items: center;
    gap: 10px;
  }
  > div:last-child { width: 400px; margin-bottom: 1px; }
`;

const Names = styled.div`
  padding: 38px 0 0;
`;

const Field = styled.div`
  display: grid;
  grid-template-columns: 152px 256px;
  align-items: center;
  padding-left: 9px;
  height: 22px;
  margin-top: 8px;
  white-space: nowrap;
`;

const Input = styled.input<{ $focus?: boolean }>`
  height: ${(p) => (p.$focus ? 22 : 20)}px;
  margin: ${(p) => (p.$focus ? 0 : "0 1px")};
  border: 1px solid #7a7a7a;
  padding: 0 4px;
  background: #fff;
  font: 11px ${sans};
  outline: 0;
  ${(p) => p.$focus && css`
    border-color: #76b900;
    box-shadow: inset 0 0 0 1px #0078d7;
    background: #ffffd0;
  `}
`;

const InputWrap = styled.div`
  position: relative;
  display: grid;
  > div {
    position: absolute;
    left: 4px;
    top: 5px;
    border-left: 1px solid #000;
  }
`;

const VBar = styled.div`
  width: 17px;
  flex: none;
  border-left: 1px solid #fff;
  background: #f0f0f0;
  display: flex;
  flex-direction: column;
  align-items: center;
  padding: 4px 1px 3px 0;
  > svg:last-child { margin-top: auto; }
`;

const VThumb = styled.div`
  width: 15px;
  flex: 0 1 381px;
  margin-top: 159px;
  background: #cdcdcd;
`;

const BarWrap = styled.div`
  border: solid #fff;
  border-width: 1px 0;
  padding-right: 16px;
  background: #f0f0f0;
`;

const BottomTabs = styled.div`
  height: 20px;
  flex: none;
  display: flex;
  background: #cac9c7;
  border: solid #b3b2b0;
  border-width: 1px 0;
`;

const BottomTab = styled.button<{ $active?: boolean }>`
  height: ${(p) => (p.$active ? 19 : 18)}px;
  padding: 0 ${(p) => (p.$active ? 4 : 0)}px 0 ${(p) => (p.$active ? 5 : 4)}px;
  background: ${(p) => (p.$active ? "#f3f2ee" : "#e0dfdd")};
  border-right: ${(p) => (p.$active ? 1 : 0)}px solid #b3b2b0;
`;

const TableFrame = styled.div`
  flex: 1;
  margin: 16px 9px 10px;
  border: 1px solid #888;
  padding-left: 19px;
  background: #fcfcfa;
`;

const Table = styled.table`
  width: 100%;
  table-layout: fixed;
  border-collapse: collapse;
  th {
    height: 20px;
    padding: 0 2px;
    text-align: left;
    font-weight: normal;
    background: linear-gradient(#fafaf8, #dcdcda);
    border-left: 1px solid #888;
    border-bottom: 1px solid #888;
  }
`;

/* ---------- relations ---------- */

const RelationTools = styled.div`
  display: flex;
  height: 40px;
  padding: 0 0 6px 10px;
  gap: 28px;
  button { gap: 4px; }
`;

const Relations = styled.div`
  padding: 0 10px;
  display: flex;
  flex-direction: column;
  gap: 5px;
`;

const RelationBox = styled.article`
  border: 1px solid #cecece;
  background: #fcfcfa;
  > button { height: 20px; margin: 0; width: 100%; }
`;

const Relation = styled.div<{ $tone: string }>`
  margin: 3px 3px 5px;
  border: 3px solid ${(p) => p.$tone};
  border-top: 0;
  background: linear-gradient(${(p) => p.$tone} 26px, #fcfcfa 26px);
  position: relative;
`;

const RelationIcons = styled.div`
  position: absolute;
  right: 2px;
  top: 4px;
  display: flex;
  gap: 4px;
`;

const RelationBody = styled.div<{ $h: number }>`
  height: ${(p) => p.$h}px;
  padding: 4px 0 0 1px;
  p { margin: 0; padding: 0 0 0 4px; line-height: 24px; }
`;

/* ---------- task bars ---------- */

const RemoteTaskbar = styled.footer`
  height: 39px;
  flex: none;
  background: #020407;
  color: #fff;
  display: flex;
  align-items: stretch;
  font: 11px/18px ${ui};
`;

const Task = styled.button<{ $open?: boolean; $active?: boolean }>`
  width: ${(p) => (p.$active ? 48 : 40)}px;
  margin-right: ${(p) => (p.$active ? 0 : 9)}px;
  justify-content: center;
  ${(p) => p.$open && css`border-bottom: 2px solid #76b9ed; padding-top: 2px;`}
  ${(p) => p.$active && css`background: #35383c; margin-left: -4px;`}
`;

const Tasks = styled.div`
  display: flex;
  padding-left: 4px;
`;

const Tray = styled.div<{ $host?: boolean }>`
  margin-left: auto;
  display: flex;
  align-items: center;
  gap: ${(p) => (p.$host ? 16 : 8)}px;
  padding-right: ${(p) => (p.$host ? 20 : 4)}px;
`;

const TrayPair = styled.div`
  display: flex;
  align-items: center;
  gap: 8px;
`;

const Clock = styled.time<{ $host?: boolean }>`
  text-align: ${(p) => (p.$host ? "right" : "center")};
  padding: ${(p) => (p.$host ? 0 : "0 8px 0 3px")};
`;

const Notice = styled.button`
  position: relative;
  width: 29px;
  span {
    position: absolute;
    left: 7px;
    top: 3px;
    width: 18px;
    height: 18px;
    border: 1px solid #aaa;
    border-radius: 50%;
    background: #333;
    font: bold 11px/16px ${ui};
    text-align: center;
  }
`;

const Edge = styled.i`
  width: 1px;
  height: 39px;
  background: #666;
`;

const HostTaskbar = styled.footer`
  border-top: 1px solid #47568f;
  background:
    linear-gradient(rgba(20, 30, 100, 0.25), rgba(40, 60, 180, 0.15)),
    linear-gradient(90deg, #4555a5 0, #32489f 130px, #1c39a6 240px, #1531a8 420px, #14279c 620px, #1733b0 800px, #1a2f95 1000px, #2a41a5 1250px, #3a50b2 1500px, #3148a4 100%);
  color: #fff;
  display: flex;
  align-items: center;
  font: 12px/16px ${ui};
`;

const HostTask = styled.button<{ $tile?: boolean }>`
  position: relative;
  width: ${(p) => (p.$tile ? 40 : 24)}px;
  height: 40px;
  margin-right: ${(p) => (p.$tile ? 0 : 9)}px;
  padding-right: ${(p) => (p.$tile ? 0 : 8)}px;
  justify-content: center;
  border-radius: 4px;
  ${(p) => p.$tile && css`background: rgba(255, 255, 255, 0.12);`}
  &::after {
    content: "";
    position: absolute;
    bottom: 1px;
    left: ${(p) => (p.$tile ? 13 : 6)}px;
    width: ${(p) => (p.$tile ? 15 : 6)}px;
    height: 3px;
    border-radius: 2px;
    background: ${(p) => (p.$tile ? "#a3bdf2" : "#9aa5d5")};
  }
`;

const HostBadge = styled.b`
  position: absolute;
  left: 9px;
  top: 3px;
  width: 16px;
  height: 16px;
  border-radius: 50%;
  background: #b5112a;
  display: grid;
  place-items: center;
  &::before { content: ""; width: 6px; height: 2px; background: #fff; }
`;

const MicTile = styled.button`
  width: 32px;
  height: 40px;
  margin: 0 -8px;
  border-radius: 4px;
  background: linear-gradient(#8b9cce, #9db4ee);
  justify-content: center;
`;

/* ---------- data ---------- */

type Item = { icon: string; label: string; level?: number; open?: boolean; selected?: boolean };

const mandate: Item[] = [
  { icon: "home", label: "Startseite" },
  { icon: "mandat", label: "Mandat", open: true, selected: true },
  { icon: "chain", label: "Empfänger für Mandantenkorres...", level: 1 },
  { icon: "chainPerson", label: "Infobriefempfänger", level: 1 },
  { icon: "chain", label: "Kontoinhaber für Rechnungssc...", level: 1 },
  { icon: "chain", label: "Rechnungsempfänger", level: 1 },
  { icon: "chainPerson", label: "Rundschreiben", level: 1 },
  { icon: "chainPerson", label: "Rundschreiben ESt", level: 1 },
  { icon: "plus", label: "Neue Beziehung anlegen", level: 1 },
  { icon: "person", label: "Natürliche Person", open: true },
  { icon: "chain", label: "Ehefrau/Lebenspartner", level: 1 },
  { icon: "plus", label: "Neue Beziehung anlegen", level: 1, open: true },
  { icon: "plus", label: "Gesetzlicher Vertreter der Pe...", level: 2 },
  { icon: "plus", label: "Kind", level: 2 },
  { icon: "docChain", label: "Beziehungsübersicht" },
  { icon: "scroll", label: "Änderungshistorie" },
  { icon: "doc", label: "Debitorendaten" },
  { icon: "hat", label: "Zuständigkeiten" },
  { icon: "docHand", label: "Leistungsübersicht" },
  { icon: "doc", label: "Organisatorische Daten" },
  { icon: "coins", label: "Geldwäschegesetz" },
];
const accounting: Item[] = ["Grunddaten Rechnungswesen", "OPOS", "Jahresabschluss"].map((label) => ({ icon: "doc", label }));
const organisation: Item[] = ["Grunddaten Rechnungsschreibung", "Individuelle Felder"].map((label) => ({ icon: "doc", label }));

const relations = [
  { title: "Hat Empfänger für Mandantenkorrespo...", lines: 4, h: 88 },
  { title: "Hat Infobriefempfänger", lines: 0, h: 49 },
  { title: "Hat Kontoinhaber für Rechnungsschreib...", lines: 6, h: 114 },
  { title: "Hat Rechnungsempfänger", lines: 4, h: 88 },
  { title: "Hat Rundschreiben", lines: 0, h: 49 },
  { title: "Hat Rundschreiben ESt", lines: 0, h: 49 },
];

const tools = ["newDoc", "open", "|", "horn", "save", "saveAs", "saveX", "|", "undo", "redo", "|", "cut", "copy", "paste", "|", "tree*", "list*", "clock", "help", "|", "lex", "picture*", "note*", "chat"];

/* ---------- parts ---------- */

function TreeList({ items }: { items: Item[] }) {
  return (
    <Tree>
      {items.map((it, i) => (
        <Row key={i} $level={it.level ?? 0}>
          <Twisty>{it.open && <Icon name="expander" size={10} />}</Twisty>
          <Node $selected={it.selected}>
            <Icon name={it.icon} />
            <span>{it.label}</span>
          </Node>
        </Row>
      ))}
    </Tree>
  );
}

function Group({ title }: { title: string }) {
  return (
    <GroupHead>
      <Round><Icon name="chevDown" size={9} /></Round>
      {title}
    </GroupHead>
  );
}

function PanelTitle({ title }: { title: string }) {
  return (
    <PanelHead>
      <Grip />
      {title}
      <button aria-label="Anheften"><Icon name="pin" size={12} /></button>
      <button aria-label="Schließen"><Icon name="close" size={12} /></button>
    </PanelHead>
  );
}

function WindowControls({ middle }: { middle: string }) {
  return (
    <Controls>
      <button aria-label="Minimieren"><Icon name="min" /></button>
      <button aria-label="Maximieren"><Icon name={middle} size={14} /></button>
      <button aria-label="Schließen"><Icon name="x" size={14} /></button>
    </Controls>
  );
}

function Scroll({ thumb }: { thumb: string }) {
  return (
    <HBar $thumb={thumb}>
      <Icon name="chevLeft" size={12} />
      <span />
      <Icon name="chevRight" size={12} />
    </HBar>
  );
}

function PowerOfAttorney({ who, children }: { who: string; children: React.ReactNode }) {
  return (
    <CardColumn>
      <Card>{children}</Card>
      <CardTools>
        <BoxButton aria-label="Drucken"><Icon name="print" size={15} /></BoxButton>
        <BoxButton aria-label="Bearbeiten"><Icon name="pencil" size={15} /></BoxButton>
      </CardTools>
      <Legend>Vollmachtsdatenbank der Kammern</Legend>
      <Action><Icon name="arrow" size={12} />PDF der Vollmacht anzeigen</Action>
      <Action><Icon name="arrow" size={12} />Vollmacht für {who} aktualisieren</Action>
      <Action><Icon name="cross" size={12} />Vollmacht für {who} löschen</Action>
    </CardColumn>
  );
}

export default function App() {
  return (
    <Desktop>
      <Global />
      <Viewer>
        <ViewerTitle>
          SP-TS - Desktop Viewer
          <WindowControls middle="max" />
        </ViewerTitle>
        <Session>
          <Gutter>
            <Strip>
              <Icon name="checks" size={30} />
              <StripClose aria-label="Schließen"><Icon name="close" size={10} /></StripClose>
              <VerticalLabel>
                <Patch $w={24} $h={60} $bg="#e4e3e0"><Smudge $w="12px" $h={48} /></Patch>
                - 98/2025
              </VerticalLabel>
              <StripTools>
                <button aria-label="Suchen"><Icon name="search" /></button>
                <button aria-label="Werkzeuge"><Icon name="wrench" size={15} /><Icon name="down" size={8} /></button>
                <button aria-label="Hilfe"><Icon name="help" size={15} /><Icon name="down" size={8} /></button>
              </StripTools>
            </Strip>
          </Gutter>

          <AppFrame>
            <AppTitle>
              <Icon name="userTile" />
              <Patch $w={336} $h={17} $bg="linear-gradient(90deg, #a9b8e2, #d5dcee 25%, #dfe3ee 60%, #ccd6f2)" />
              <SessionHandle aria-label="Sitzungsleiste">
                <Dots /><Icon name="downStem" size={10} /><Dots />
              </SessionHandle>
              <WindowControls middle="restore" />
            </AppTitle>
            <MenuBar>
              {["Datei", "Bearbeiten", "Ansicht", "Eigenorganisation", "Extras", "Fenster", "Hilfe"].map((m) => (
                <button key={m}>{m}</button>
              ))}
            </MenuBar>
            <Toolbar>
              <Grip />
              {tools.map((t, i) =>
                t === "|" ? <Separator key={i} /> : (
                  <Tool key={i} $on={t.endsWith("*")} aria-label={t.replace("*", "")}>
                    <Icon name={t.replace("*", "")} />
                  </Tool>
                )
              )}
              <TextTool>Feedback geben</TextTool>
              <Overflow aria-label="Weitere"><Icon name="more" size={8} /></Overflow>
            </Toolbar>
            <Toolbar>
              <Grip />
              <Tool aria-label="Zeile einfügen"><Icon name="formPlus" /></Tool>
              <Tool aria-label="Bearbeiten"><Icon name="edit" /></Tool>
              <Tool aria-label="Assistent"><Icon name="wand" /></Tool>
              <Icon name="down" size={6} />
              <Overflow $near aria-label="Weitere"><Icon name="more" size={8} /></Overflow>
            </Toolbar>

            <Workspace>
              <Panel $bg="#fcfcfa">
                <PanelTitle title="Übersicht" />
                <Group title="Zentrale Mandantendaten" />
                <TreeList items={mandate} />
                <TreeScroll><Scroll thumb="77%" /></TreeScroll>
                <Group title="Mandantendaten Rechnungsw..." />
                <TreeList items={accounting} />
                <Spacer />
                <Group title="Organisation" />
                <TreeList items={organisation} />
              </Panel>
              <Splitter />
              <Center>
                <Tabs>
                  <Tab>Startseite<Icon name="close" size={10} /></Tab>
                  <Tab $active>Mandat<Icon name="close" size={10} /></Tab>
                  <TabMenu aria-label="Fensterliste"><Icon name="down" size={12} /></TabMenu>
                </Tabs>
                <Canvas>
                  <Form>
                    <CardRow>
                      <PowerOfAttorney who="die Natürliche Person">
                        <Patch $w={199} $h={130} $bg="linear-gradient(#c1dc9b, #d3e4ba 30%, #e2ecd4 60%, #eef3e6)">
                          <Smudge $w="68px" $c="#6b7b55" $h={42} $mt={4} />
                          <Smudge $w="78px" $c="#6b7b55" $h={16} />
                          <Smudge $w="150px" $c="#84907a" $h={24} $mt={18} />
                        </Patch>
                      </PowerOfAttorney>
                      <PowerOfAttorney who="den Ehe-/Lebenspartner">
                        <Patch $w={106} $h={81} $bg="linear-gradient(#cde2ab, #e1ecca)">
                          <Smudge $w="20px" $c="#6b7b55" />
                          <Smudge $w="60px" $c="#6b7b55" />
                          <Smudge $w="84px" $c="#6b7b55" />
                          <Smudge $w="68px" $c="#6b7b55" />
                        </Patch>
                      </PowerOfAttorney>
                      <EmptyList>
                        <div>
                          <Icon name="emptyDoc" size={18} />
                          Keine Daten vorhanden
                        </div>
                        <Scroll thumb="213px" />
                      </EmptyList>
                    </CardRow>
                    <Names>
                      <Legend $tight>Vorschau der Mandantenbezeichnungen</Legend>
                      <Field>
                        <label htmlFor="name">Mandantenbezeichnung:</label>
                        <InputWrap>
                          <Input id="name" $focus />
                          <Patch $w={44} $h={13} $bg="#dfe0bd"><Smudge $w="26px" $h={4} $c="#667" /></Patch>
                        </InputWrap>
                      </Field>
                      <Field>
                        <label htmlFor="alt">Abw. Mandantenbezeichnung:</label>
                        <Input id="alt" />
                      </Field>
                    </Names>
                  </Form>
                  <VBar>
                    <Icon name="chevUp" size={11} />
                    <VThumb />
                    <Icon name="chevDown" size={11} />
                  </VBar>
                </Canvas>
                <BarWrap><Scroll thumb="72%" /></BarWrap>
                <Splitter $row />
                <BottomTabs>
                  <BottomTab $active>Hinweise</BottomTab>
                  <BottomTab>
                    Notiz für Mandant
                    <Patch $w={122} $h={18} $bg="#d9d8d6"><Smudge $w="106px" $h={8} $c="#999" /></Patch>
                  </BottomTab>
                </BottomTabs>
                <BottomPanel />
              </Center>
              <Splitter />
              <Panel $bg="#f0f0f0">
                <PanelTitle title="Beziehungen" />
                <RelationTools>
                  <button><Icon name="search" size={15} />Suche</button>
                  <button><Icon name="plus" size={14} />Neue Beziehung anlegen</button>
                </RelationTools>
                <Relations>
                  {relations.map((r) => (
                    <RelationBox key={r.title}>
                      <Group title={r.title} />
                      <Relation $tone={r.lines ? "#e7efd9" : "#c5d5e1"}>
                        <RelationBody $h={r.h}>
                          {r.lines ? (
                            <Patch $w={196} $h={r.h - 7} $bg="linear-gradient(#d5dcc7 14px, #e9ebe5 24px, #f0f0ef 60%, #f4f4f3)">
                              <Smudge $w="172px" $c="#75826b" $h={10} />
                              <Smudge $w={r.lines > 4 ? "86px" : "66px"} $h={12} $mt={12} />
                              <Smudge $w={r.lines > 4 ? "160px" : "100px"} $h={14} />
                              <Smudge $w="80px" $h={16} />
                              {r.lines > 4 && <Smudge $w="110px" $h={18} $mt={12} />}
                            </Patch>
                          ) : (
                            <>
                              <Patch $w={146} $h={21} $bg="#bccad5"><Smudge $w="126px" $h={9} $c="#2f4250" /></Patch>
                              <p>Keine Daten vorhanden...</p>
                            </>
                          )}
                        </RelationBody>
                        <RelationIcons>
                          <button aria-label="Bearbeiten"><Icon name="pencil" /></button>
                          <button aria-label="Beziehung lösen"><Icon name="chainX" /></button>
                        </RelationIcons>
                      </Relation>
                    </RelationBox>
                  ))}
                </Relations>
              </Panel>
            </Workspace>
            <StatusBar>NUM</StatusBar>
          </AppFrame>
        </Session>
        <RemoteTaskbar>
          <Tasks>
            <Task aria-label="Start"><Icon name="windows" /></Task>
            <Task aria-label="Suche"><Icon name="find" /></Task>
            <Task aria-label="Aktive Anwendungen"><Icon name="taskView" /></Task>
            <Task aria-label="Edge"><Icon name="edge" size={24} /></Task>
            <Task aria-label="Explorer"><Icon name="folder" size={23} /></Task>
            <Task aria-label="Ausschneiden"><Icon name="snip" size={22} /></Task>
            <Task $open aria-label="Telefon"><Icon name="phone" size={21} /></Task>
            <Task $open aria-label="Outlook"><Icon name="outlook" size={24} /></Task>
            <Task $open aria-label="Tresor"><Icon name="lock" size={22} /></Task>
            <Task $open aria-label="Teams"><Icon name="teams" size={24} /></Task>
            <Task $open aria-label="Aufgaben"><Icon name="checks" size={21} /></Task>
            <Task $open $active aria-label="Stammdaten"><Icon name="userTile" size={21} /></Task>
          </Tasks>
          <Tray>
            <Icon name="thinUp" size={14} />
            <Icon name="battery" />
            <Icon name="network" />
            <Volume2 size={17} strokeWidth={1.5} />
            <Clock>11:26<br />27.03.2025</Clock>
            <Notice aria-label="Benachrichtigungen"><Icon name="message" /><span>21</span></Notice>
            <Edge />
          </Tray>
        </RemoteTaskbar>
      </Viewer>
      <HostTaskbar>
        <HostTask aria-label="Teams"><Icon name="teamsPlain" size={20} /><HostBadge /></HostTask>
        <HostTask $tile aria-label="Desktop Viewer"><Icon name="monitor" size={21} /></HostTask>
        <Tray $host>
          <Icon name="thinUp" size={12} />
          <Icon name="cloud" />
          <Icon name="teams" />
          <Icon name="swirl" size={14} />
          <Icon name="teamViewer" />
          <MicTile aria-label="Mikrofon"><Icon name="mic" /></MicTile>
          <Navigation size={15} strokeWidth={1.5} />
          <TrayPair>
            <Wifi size={16} />
            <Volume2 size={16} strokeWidth={1.5} />
          </TrayPair>
          <TrayPair>
            <Clock $host>11:26<br />27.03.2025</Clock>
            <Icon name="snooze" size={15} />
          </TrayPair>
        </Tray>
      </HostTaskbar>
    </Desktop>
  );
}

const Bottom = styled(Panel)`
  height: 175px;
  flex: none;
  ${PanelHead} { height: 25px; border-width: 2px; }
`;

function BottomPanel() {
  return (
    <Bottom $bg="#f3f2ee">
      <PanelTitle title="Hinweise" />
      <TableFrame>
        <Table>
          <colgroup><col width="89" /><col /><col width="25" /><col width="25" /></colgroup>
          <thead>
            <tr><th scope="col" /><th scope="col">Beschreibung</th><th scope="col" /><th scope="col" /></tr>
          </thead>
          <tbody />
        </Table>
      </TableFrame>
    </Bottom>
  );
}
